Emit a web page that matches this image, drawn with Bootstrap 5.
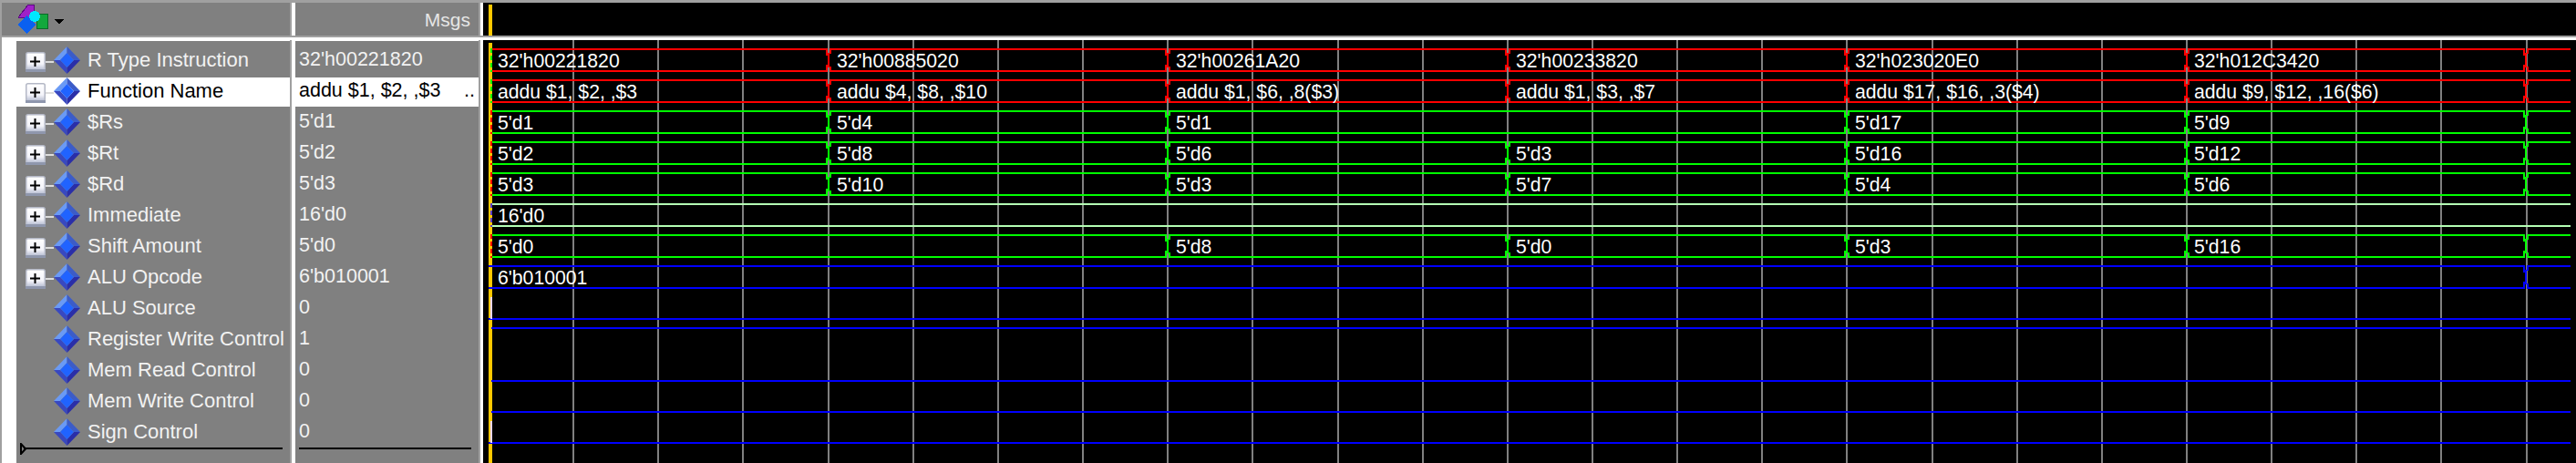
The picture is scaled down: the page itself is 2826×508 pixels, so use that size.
<!DOCTYPE html>
<html lang="en">
<head>
<meta charset="utf-8">
<title>Wave</title>
<link href="https://cdn.jsdelivr.net/npm/bootstrap@5.3.0/dist/css/bootstrap.min.css" rel="stylesheet">
<style>
html,body{margin:0;background:#a0a0a0;overflow:hidden}
body{font-family:"Liberation Sans",Arial,sans-serif;font-size:22px;line-height:1;color:#f2f2f2}
.wv-shell{width:2826px;height:508px;padding-top:3px}
.wv-top{height:36px}
.wv-names{width:316px;margin-left:2px;background:#808080;flex:none}
.wv-split{width:6px;flex:none;background:#fff;border-left:2px solid #a0a0a0}
.wv-vals{width:201px;background:#808080;flex:none}
.wv-split2{width:5px;flex:none;background:#fff;border-left:2px solid #a0a0a0}
.wv-black{background:#000;flex:1 1 auto;min-width:0}
.wv-band{height:2px;background:#a0a0a0}
.wv-strip{height:3px;background:#fff;margin-left:2px}
.wv-head-icon{margin:2px 0 0 18px}
.wv-msgs{padding-right:9px;color:#e6e6e6;font-size:21px}
.wv-cursor-top{width:4px;height:34px;margin:2px 0 0 6px;background:#ffc800}
.wv-body{height:464px}
.wv-gutter{width:16px;margin-left:2px;background:#fff;flex:none}
.wv-list{width:300px;flex:none;background:#808080;border-top:1px solid #fff;padding-top:4px}
.wv-vlist{width:201px;flex:none;background:#808080;border-top:1px solid #fff;padding-top:4px;font-size:21.5px}
.wv-row{height:34px;padding-left:10px;padding-bottom:1px;white-space:nowrap}
.wv-vrow{height:34px;padding-left:4px;padding-right:4px;padding-bottom:1px;white-space:nowrap}
.wv-sel{background:#fff;box-shadow:inset 0 2px #808080;color:#000}
.wv-plus{width:22px;height:22px;margin-top:4px;flex:none}
.wv-link{width:9px;height:2px;background:#dcdcdc;flex:none;margin-top:4px}
.wv-blank{width:31px;flex:none}
.wv-dia{width:29px;height:30px;flex:none;margin-right:8px;margin-top:1px}
.wv-foot{height:12px;margin-top:-5px;padding-left:4px;padding-right:8px}
.wv-rule{height:2px;background:#000;flex:1 1 auto;margin-left:-3px}
.wv-vfoot{height:12px;margin-top:-5px;padding-left:4px;padding-right:8px}
.wv-vrule{height:2px;background:#000;flex:1 1 auto}
.wv-canvas{display:block;width:2296px;height:464px;background:#000}
.wv-canvas text{font-family:"Liberation Sans",Arial,sans-serif;font-size:21.2px;fill:#fff}
</style>
</head>
<body>
<svg width="0" height="0" class="position-absolute">
  <defs>
    <symbol id="wv-diamond" viewBox="0 0 29 30">
      <polygon points="14.5,0 0,15 7,15 14.5,7" fill="#6a9af5"/>
      <polygon points="14.5,0 29,15 22,15 14.5,7" fill="#3c5cc8"/>
      <polygon points="0,15 14.5,30 14.5,23 7,15" fill="#3848c0"/>
      <polygon points="29,15 14.5,30 14.5,23 22,15" fill="#2a2ea8"/>
      <polygon points="14.5,7 22,15 14.5,23 7,15" fill="#2063ff"/>
    </symbol>
    <linearGradient id="wv-boxfill" x1="0" y1="0" x2="0" y2="1">
      <stop offset="0" stop-color="#ffffff"/>
      <stop offset=".6" stop-color="#f4f4fa"/>
      <stop offset="1" stop-color="#a8b0c8"/>
    </linearGradient>
    <symbol id="wv-box" viewBox="0 0 22 22">
      <rect x=".75" y=".75" width="20.5" height="20.5" rx="2" fill="url(#wv-boxfill)" stroke="#b4b8c6" stroke-width="1.5"/>
      <rect x="0" y="19" width="22" height="3" fill="#8f97ad"/>
      <rect x="5" y="9.5" width="11" height="2" fill="#000"/>
      <rect x="9.5" y="5" width="2" height="11" fill="#000"/>
    </symbol>
  </defs>
</svg>

<div class="wv-shell d-flex flex-column">
  <div class="wv-top d-flex">
    <div class="wv-names d-flex align-items-start">
      <svg class="wv-head-icon" width="52" height="34" viewBox="0 0 52 34" shape-rendering="crispEdges" role="img" aria-label="wave">
        <polygon points="0,14 11,0 17,0 17,14" fill="#a020c8" stroke="#5a0a80"/>
        <rect x="20" y="10" width="12" height="16" fill="#12a83c" stroke="#0a6a28"/>
        <polygon points="9,12 0,22 9,32 19,22" fill="#0a60f0"/>
        <circle cx="18" cy="13" r="6" fill="#00e8ff"/>
        <polygon points="40,16 50,16 45,22" fill="#000"/>
      </svg>
    </div>
    <div class="wv-split"></div>
    <div class="wv-vals wv-msgs d-flex justify-content-end align-items-center">Msgs</div>
    <div class="wv-split2"></div>
    <div class="wv-black"><div class="wv-cursor-top"></div></div>
  </div>
  <div class="wv-band"></div>
  <div class="wv-strip"></div>
  <div class="wv-body d-flex">
    <div class="wv-gutter"></div>
    <div class="wv-list">
      <div class="wv-row d-flex align-items-center"><svg class="wv-plus"><use href="#wv-box"/></svg><span class="wv-link"></span><svg class="wv-dia"><use href="#wv-diamond"/></svg>R Type Instruction</div>
      <div class="wv-row wv-sel d-flex align-items-center"><svg class="wv-plus"><use href="#wv-box"/></svg><span class="wv-link"></span><svg class="wv-dia"><use href="#wv-diamond"/></svg>Function Name</div>
      <div class="wv-row d-flex align-items-center"><svg class="wv-plus"><use href="#wv-box"/></svg><span class="wv-link"></span><svg class="wv-dia"><use href="#wv-diamond"/></svg>$Rs</div>
      <div class="wv-row d-flex align-items-center"><svg class="wv-plus"><use href="#wv-box"/></svg><span class="wv-link"></span><svg class="wv-dia"><use href="#wv-diamond"/></svg>$Rt</div>
      <div class="wv-row d-flex align-items-center"><svg class="wv-plus"><use href="#wv-box"/></svg><span class="wv-link"></span><svg class="wv-dia"><use href="#wv-diamond"/></svg>$Rd</div>
      <div class="wv-row d-flex align-items-center"><svg class="wv-plus"><use href="#wv-box"/></svg><span class="wv-link"></span><svg class="wv-dia"><use href="#wv-diamond"/></svg>Immediate</div>
      <div class="wv-row d-flex align-items-center"><svg class="wv-plus"><use href="#wv-box"/></svg><span class="wv-link"></span><svg class="wv-dia"><use href="#wv-diamond"/></svg>Shift Amount</div>
      <div class="wv-row d-flex align-items-center"><svg class="wv-plus"><use href="#wv-box"/></svg><span class="wv-link"></span><svg class="wv-dia"><use href="#wv-diamond"/></svg>ALU Opcode</div>
      <div class="wv-row d-flex align-items-center"><span class="wv-blank"></span><svg class="wv-dia"><use href="#wv-diamond"/></svg>ALU Source</div>
      <div class="wv-row d-flex align-items-center"><span class="wv-blank"></span><svg class="wv-dia"><use href="#wv-diamond"/></svg>Register Write Control</div>
      <div class="wv-row d-flex align-items-center"><span class="wv-blank"></span><svg class="wv-dia"><use href="#wv-diamond"/></svg>Mem Read Control</div>
      <div class="wv-row d-flex align-items-center"><span class="wv-blank"></span><svg class="wv-dia"><use href="#wv-diamond"/></svg>Mem Write Control</div>
      <div class="wv-row d-flex align-items-center"><span class="wv-blank"></span><svg class="wv-dia"><use href="#wv-diamond"/></svg>Sign Control</div>
      <div class="wv-foot d-flex align-items-center">
        <svg width="7" height="13" viewBox="0 0 7 13" class="flex-none"><polygon points="1,1 6,6.5 1,12" fill="none" stroke="#000" stroke-width="2"/></svg>
        <span class="wv-rule"></span>
      </div>
    </div>
    <div class="wv-split"></div>
    <div class="wv-vlist">
      <div class="wv-vrow d-flex align-items-center">32'h00221820</div>
      <div class="wv-vrow wv-sel d-flex align-items-center justify-content-between"><span>addu $1, $2, ,$3</span><span>..</span></div>
      <div class="wv-vrow d-flex align-items-center">5'd1</div>
      <div class="wv-vrow d-flex align-items-center">5'd2</div>
      <div class="wv-vrow d-flex align-items-center">5'd3</div>
      <div class="wv-vrow d-flex align-items-center">16'd0</div>
      <div class="wv-vrow d-flex align-items-center">5'd0</div>
      <div class="wv-vrow d-flex align-items-center">6'b010001</div>
      <div class="wv-vrow d-flex align-items-center">0</div>
      <div class="wv-vrow d-flex align-items-center">1</div>
      <div class="wv-vrow d-flex align-items-center">0</div>
      <div class="wv-vrow d-flex align-items-center">0</div>
      <div class="wv-vrow d-flex align-items-center">0</div>
      <div class="wv-vfoot d-flex align-items-center"><span class="wv-vrule"></span></div>
    </div>
    <div class="wv-split2"></div>
    <div class="wv-black">
      <svg class="wv-canvas" viewBox="0 0 2296 464" role="img" aria-label="waveform">
        <g id="wv-lines" shape-rendering="crispEdges" fill="none"></g>
        <text x="16" y="30">32'h00221820</text><text x="388" y="30">32'h00885020</text><text x="760" y="30">32'h00261A20</text><text x="1133" y="30">32'h00233820</text><text x="1505" y="30">32'h023020E0</text><text x="1877" y="30">32'h012C3420</text>
        <text x="16" y="64">addu $1, $2, ,$3</text><text x="388" y="64">addu $4, $8, ,$10</text><text x="760" y="64">addu $1, $6, ,8($3)</text><text x="1133" y="64">addu $1, $3, ,$7</text><text x="1505" y="64">addu $17, $16, ,3($4)</text><text x="1877" y="64">addu $9, $12, ,16($6)</text>
        <text x="16" y="98">5'd1</text><text x="388" y="98">5'd4</text><text x="760" y="98">5'd1</text><text x="1505" y="98">5'd17</text><text x="1877" y="98">5'd9</text>
        <text x="16" y="132">5'd2</text><text x="388" y="132">5'd8</text><text x="760" y="132">5'd6</text><text x="1133" y="132">5'd3</text><text x="1505" y="132">5'd16</text><text x="1877" y="132">5'd12</text>
        <text x="16" y="166">5'd3</text><text x="388" y="166">5'd10</text><text x="760" y="166">5'd3</text><text x="1133" y="166">5'd7</text><text x="1505" y="166">5'd4</text><text x="1877" y="166">5'd6</text>
        <text x="16" y="200">16'd0</text>
        <text x="16" y="234">5'd0</text><text x="760" y="234">5'd8</text><text x="1133" y="234">5'd0</text><text x="1505" y="234">5'd3</text><text x="1877" y="234">5'd16</text>
        <text x="16" y="268">6'b010001</text>
      </svg>
    </div>
  </div>
</div>

<script src="https://cdn.jsdelivr.net/npm/bootstrap@5.3.0/dist/js/bootstrap.bundle.min.js"></script>
<script>
(function(){
  var NS='http://www.w3.org/2000/svg', g=document.getElementById('wv-lines');
  function seg(c,x1,y1,x2,y2,w,dash){
    var l=document.createElementNS(NS,'line');
    l.setAttribute('x1',x1);l.setAttribute('y1',y1);l.setAttribute('x2',x2);l.setAttribute('y2',y2);
    l.setAttribute('stroke',c);l.setAttribute('stroke-width',w||2);
    if(dash)l.setAttribute('stroke-dasharray',dash);
    g.appendChild(l);
  }
  var k;
  for(k=1;k<=24;k++){var gx=Math.round(6+93.15*k);seg('#808080',gx,0,gx,464);}
  seg('#ffc800',8,3,8,464,4);
  var T=[379,751,1124,1496,1869,2241], END=2290, RED='#ff0000', GRN='#00ff00', BLU='#0000ff';
  var rows=[
    {c:RED,d:GRN,t:[0,1,2,3,4,5]},
    {c:RED,d:GRN,t:[0,1,2,3,4,5]},
    {c:GRN,d:RED,t:[0,1,3,4,5]},
    {c:GRN,d:RED,t:[0,1,2,3,4,5]},
    {c:GRN,d:RED,t:[0,1,2,3,4,5]},
    {c:'#b4ffb4',d:'#5a3cc8',t:[]},
    {c:GRN,d:RED,t:[1,2,3,4,5]},
    {c:BLU,t:[5],s:6}
  ];
  rows.forEach(function(r,i){
    var top=10+34*i, bot=34+34*i, xs=r.t.map(function(n){return T[n]}), from=r.s||10;
    if(r.d){seg(r.d,9,top-1,9,bot+1,2,'5,3');}
    xs.forEach(function(X){
      seg(r.c,from,top,X-1,top);seg(r.c,from,bot,X-1,bot);
      seg(r.c,X-2,top-1,X-2,top+7);seg(r.c,X+2,top-1,X+2,top+5);
      seg(r.c,X-2,bot-7,X-2,bot+1);seg(r.c,X+2,bot-5,X+2,bot+1);
      seg(r.c,X,top+4,X,bot-4);
      from=X+1;
    });
    seg(r.c,from,top,END,top);seg(r.c,from,bot,END,bot);
  });
  [[8,1,6],[9,0,9],[10,1,9],[11,1,9],[12,1,6]].forEach(function(b){
    var y=b[1]?34+34*b[0]:10+34*b[0];
    seg(BLU,b[2],y,END,y);
  });
  seg('#ead6ff',9,10+34*8,9,34+34*8,1.5);
  seg('#ead6ff',9,10+34*12,9,34+34*12,1.5);
})();
</script>
</body>
</html>
